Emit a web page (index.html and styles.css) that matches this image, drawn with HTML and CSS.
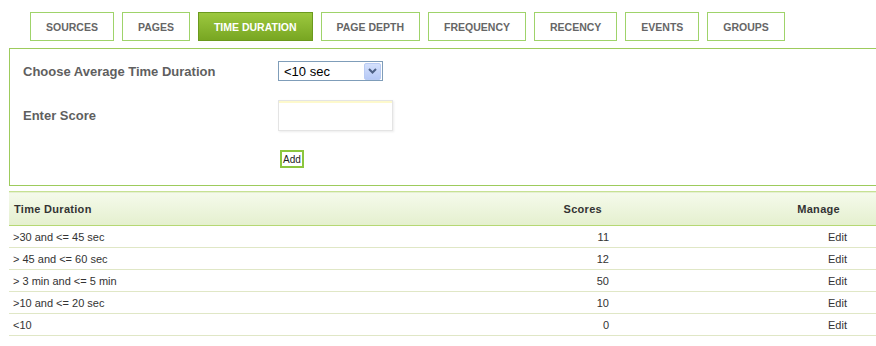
FILE: index.html
```html
<!DOCTYPE html>
<html>
<head>
  <title>Time Duration Scores</title>
  <link rel="stylesheet" href="styles.css">
</head>
<body>
  <div class="tabs">
    <a class="tab">SOURCES</a>
    <a class="tab">PAGES</a>
    <a class="tab active">TIME DURATION</a>
    <a class="tab">PAGE DEPTH</a>
    <a class="tab">FREQUENCY</a>
    <a class="tab">RECENCY</a>
    <a class="tab">EVENTS</a>
    <a class="tab">GROUPS</a>
  </div>

  <div class="form-box">
    <span class="form-label">Choose Average Time Duration</span>
    <div class="select">
      <span class="select-text">&lt;10 sec</span>
      <span class="select-arrow">
        <svg width="9" height="6" viewBox="0 0 9 6"><path d="M1 1 L4.5 4.5 L8 1" fill="none" stroke="#4d6185" stroke-width="2"/></svg>
      </span>
    </div>

    <span class="form-label">Enter Score</span>
    <input type="text" class="score-input">

    <span></span>
    <div><button class="add-button">Add</button></div>
  </div>

  <table class="score-table">
    <colgroup>
      <col class="col-duration">
      <col class="col-scores">
      <col class="col-manage">
    </colgroup>
    <thead>
      <tr>
        <th class="duration">Time Duration</th>
        <th class="scores">Scores</th>
        <th class="manage">Manage</th>
      </tr>
    </thead>
    <tbody>
      <tr><td>&gt;30 and &lt;= 45 sec</td><td class="scores">11</td><td class="manage">Edit</td></tr>
      <tr><td>&gt; 45 and &lt;= 60 sec</td><td class="scores">12</td><td class="manage">Edit</td></tr>
      <tr><td>&gt; 3 min and &lt;= 5 min</td><td class="scores">50</td><td class="manage">Edit</td></tr>
      <tr><td>&gt;10 and &lt;= 20 sec</td><td class="scores">10</td><td class="manage">Edit</td></tr>
      <tr><td>&lt;10</td><td class="scores">0</td><td class="manage">Edit</td></tr>
    </tbody>
  </table>
</body>
</html>
```

FILE: styles.css
```css
body {
  font-family: "Liberation Sans", Arial, sans-serif;
  background-color: #ffffff;
  margin: 0;
  padding: 0;
  color: #333333;
}

.tabs {
  display: flex;
  gap: 8px;
  padding: 12px 0 0 30px;
}

.tab {
  display: flex;
  align-items: center;
  justify-content: center;
  height: 27px;
  padding: 0 15px;
  border: 1px solid #9fd36a;
  font-size: 10.5px;
  font-weight: bold;
  color: #666666;
  cursor: pointer;
}

.tab.active {
  background: linear-gradient(#9cc83f, #78a622);
  border-color: #6b9a1e;
  color: #ffffff;
}

.form-box {
  display: grid;
  grid-template-columns: 255px auto;
  grid-template-rows: 20px 31px 18px;
  align-items: center;
  row-gap: 19px;
  margin: 7px 0 0 9px;
  padding: 12px 0 17px 13px;
  border: 1px solid #9dcb5c;
  border-right: none;
}

.form-label {
  font-size: 13px;
  font-weight: bold;
  color: #5f5f5f;
}

.select {
  display: flex;
  align-items: center;
  justify-content: space-between;
  width: 103px;
  height: 18px;
  border: 1px solid #7f9db9;
  background-color: #ffffff;
}

.select-text {
  font-size: 13px;
  color: #000000;
  padding-left: 5px;
}

.select-arrow {
  display: flex;
  align-items: center;
  justify-content: center;
  width: 15px;
  height: 15px;
  margin-right: 1px;
  border: 1px solid #b9cbf3;
  border-radius: 2px;
  background: linear-gradient(#d4e0fc, #b6c9f6);
}

.score-input {
  width: 113px;
  height: 29px;
  padding: 0;
  margin: 0;
  border: 1px solid #e4e4e4;
  box-shadow: inset 0 2px 0 #fdf9cc, 1px 1px 2px rgba(0, 0, 0, 0.08);
}

.add-button {
  display: block;
  margin-left: 2px;
  height: 18px;
  padding: 0 1px;
  border: 2px solid #8cc63e;
  background-color: #ffffff;
  font-family: "Liberation Sans", Arial, sans-serif;
  font-size: 10px;
  color: #222222;
  cursor: pointer;
}

.score-table {
  margin: 5px 0 0 9px;
  width: 867px;
  border-collapse: collapse;
  table-layout: fixed;
  font-size: 11px;
}

.col-duration { width: 391px; }
.col-scores { width: 213px; }
.col-manage { width: 263px; }

.score-table thead tr {
  background: linear-gradient(#f5faeb, #e5f0cf);
  border-top: 1px solid #c6e193;
  border-bottom: 1px solid #b5d873;
}

.score-table th {
  height: 33px;
  padding: 0 0 0 5px;
  font-weight: bold;
  letter-spacing: 0.3px;
  color: #333333;
  text-align: left;
}

.score-table td {
  height: 21px;
  padding: 0 0 0 4px;
  border-bottom: 1px solid #e0e7c6;
  color: #333333;
}

.score-table .scores {
  text-align: right;
  padding-right: 4px;
}

.score-table th.scores {
  padding-right: 11px;
}

.score-table .manage {
  text-align: right;
  padding-right: 29px;
}

.score-table th.manage {
  padding-right: 36px;
}
```
